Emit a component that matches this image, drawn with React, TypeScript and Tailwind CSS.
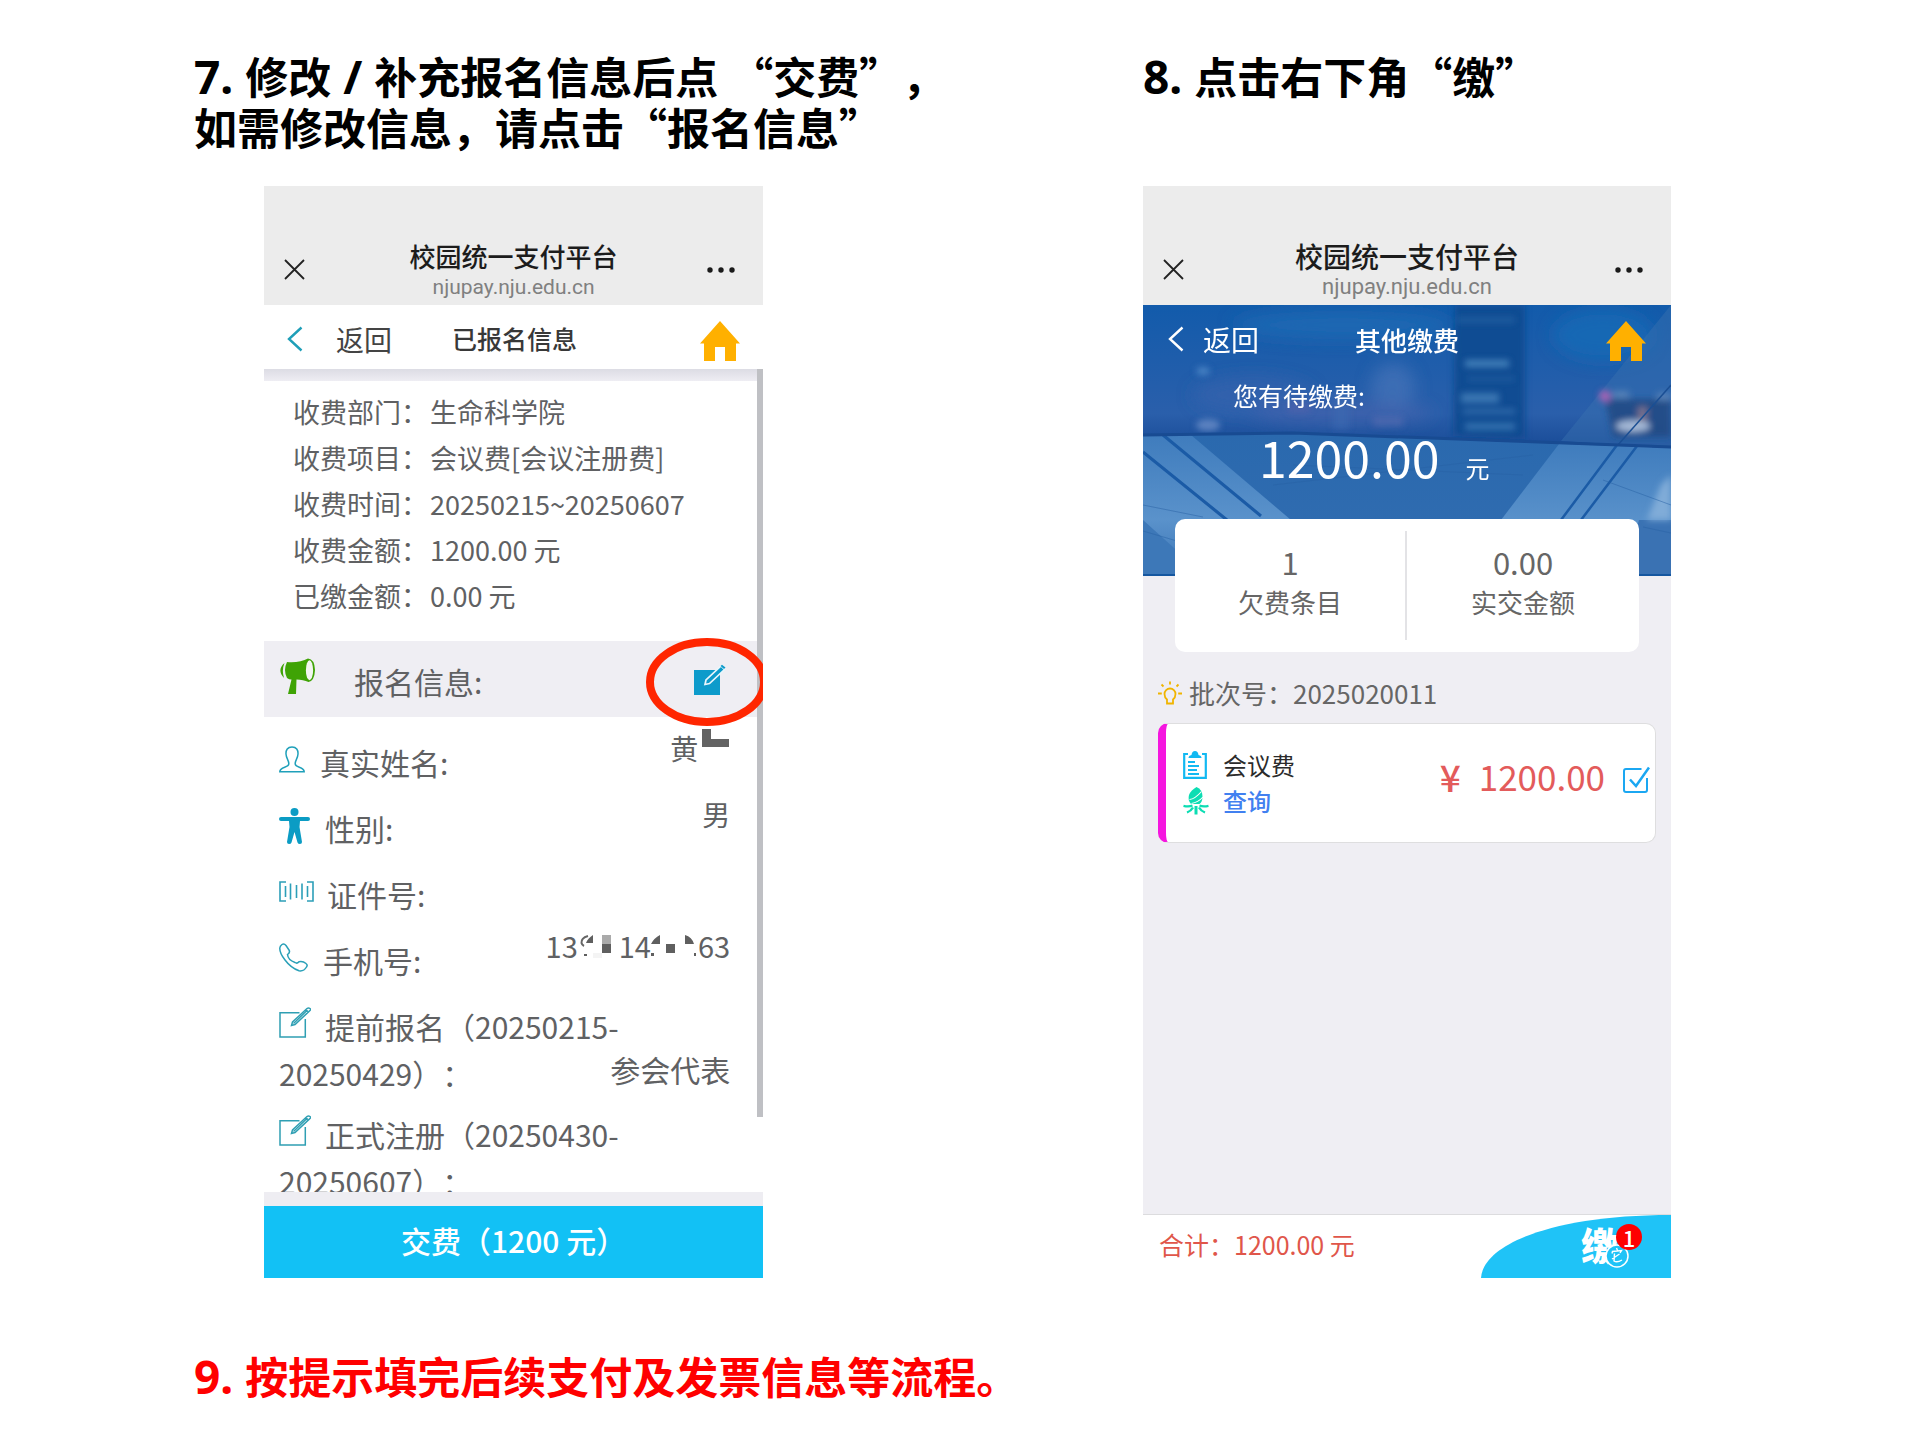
import React from "react";

const cjk = "font-['Noto_Sans_CJK_SC',sans-serif]";

function Num({ children }: { children: React.ReactNode }) {
  return <span className="font-['Noto_Sans','Noto_Sans_CJK_SC',sans-serif] text-[46px] leading-none">{children}</span>;
}

function BrowserBar({ titleClass, urlClass }: { titleClass: string; urlClass: string }) {
  return (
    <header className="grid h-[119px] grid-cols-[80px_1fr_80px] bg-[#ececec]">
      <button aria-label="关闭" className="flex items-start pl-[19px] pt-[72px]">
        <svg width="23" height="23" viewBox="0 0 23 23" fill="none" stroke="#222" strokeWidth="1.8">
          <path d="M2 2 21 21M21 2 2 21" />
        </svg>
      </button>
      <div className="flex flex-col items-center pt-[53px]">
        <div className={titleClass}>校园统一支付平台</div>
        <div className={urlClass}>njupay.nju.edu.cn</div>
      </div>
      <button aria-label="更多" className="flex items-start justify-end pr-[28px] pt-[81px]">
        <svg width="28" height="6" viewBox="0 0 28 6" fill="#1a1a1a">
          <circle cx="3" cy="3" r="2.7" />
          <circle cx="14" cy="3" r="2.7" />
          <circle cx="25" cy="3" r="2.7" />
        </svg>
      </button>
    </header>
  );
}

function Back({ stroke }: { stroke: string }) {
  return (
    <svg width="16" height="26" viewBox="0 0 16 26" fill="none" stroke={stroke} strokeWidth="2.4">
      <path d="M14.5 1.5 2 13 14.5 24.5" />
    </svg>
  );
}

function Home() {
  return (
    <svg width="40" height="40" viewBox="0 0 40 40" fill="#ffb000">
      <path d="M20 0 40 22.5H36V40H25V26H15V40H4V22.5H0Z" />
    </svg>
  );
}

function Megaphone() {
  return (
    <svg width="36" height="36" viewBox="0 0 36 36">
      <path d="M8 4C16 5 24 3 29 .5Q35.500 1 36 12Q35.5 23 29.5 24C26 22.500 22 21.5 17.500 21.5L17 36H9L12.5 21.5Q10 21.5 8 20Q4 12 8 4Z" fill="#3fa305" />
      <ellipse cx="30.5" cy="12.3" rx="3.6" ry="10" fill="#f2f5f0" />
      <path d="M5.5 5Q-2.5 12 5 20Q2.5 12 5.500 5Z" fill="#3fa305" />
    </svg>
  );
}

function PersonIcon() {
  return (
    <svg width="26" height="27" viewBox="0 0 26 27" fill="none" stroke="#1fa0ba" strokeWidth="1.5">
      <path d="M13 1C8.5 1 6.800 4 7 8C7.2 12.5 10 14.500 9.800 18C9.5 22 1 20.500 .8 25.700H25.200C25 20.5 16.5 22 16.200 18C16 14.500 18.8 12.500 19 8C19.2 4 17.500 1 13 1Z" />
    </svg>
  );
}

function BodyIcon() {
  return (
    <svg width="31" height="36" viewBox="0 0 31 36" fill="#0b9cc4">
      <circle cx="15.5" cy="4" r="4" />
      <path d="M2 9H29Q31 9 31 11T29 13H21L20.5 19 23 34Q23 36 21 36T18.5 34.5L15.500 24 12.5 34.500Q12 36 10 36T8 34L10.500 19 10 13H2Q0 13 0 11T2 9Z" />
    </svg>
  );
}

function BarcodeIcon() {
  return (
    <svg width="35" height="21" viewBox="0 0 35 21" fill="none" stroke="#2c9fb8" strokeWidth="1.6">
      <path d="M7 1H1V20H7M28 1H34V20H28M6.5 5V16M11.500 2.500V18.500M17.500 4V17M23 2.500V18.500M28.500 5V16" />
    </svg>
  );
}

function PhoneIcon() {
  return (
    <svg width="29" height="29" viewBox="0 0 29 29" fill="none" stroke="#2aa0b8" strokeWidth="1.5">
      <path d="M3 1.5Q5 0 7 2.5L10 7Q11.5 9.500 8.500 11.500Q9 17 16 19.500Q18 21 20 18.800Q24 18 27 20.500Q29 22 27.500 24Q25 28.500 20 27.800Q12 25 6 17Q.5 10 .8 5Q1 3 3 1.500Z" />
    </svg>
  );
}

function EditIcon() {
  return (
    <svg width="32" height="31" viewBox="0 0 32 31" fill="none" stroke="#2f9fb3" strokeWidth="1.5">
      <path d="M20.500 5.700H1V30H26.300V12" />
      <path d="M12.500 18.500 13.500 15 28 1.500Q29.500 .3 31 1.500T30.300 4.200L16 17.500ZM26.500 3 29 5.500" />
      <path d="M14.500 16.500 28.500 3" />
    </svg>
  );
}

function EditSolid() {
  return (
    <svg width="32" height="31" viewBox="0 0 32 31">
      <path d="M0 6H26V31H0Z" fill="#0d9bcb" />
      <path d="M11 20.500 12 16 27 2 30.500 5.500 15.500 19.500Z" fill="#0d9bcb" stroke="#eaf6fb" strokeWidth="1.7" />
      <path d="M28 .8 31.500 3.500 30 5 26.500 2Z" fill="#0d9bcb" />
    </svg>
  );
}

function NameMask() {
  return (
    <svg width="32" height="20" viewBox="0 0 32 20" fill="#636363" aria-hidden="true">
      <path d="M4 0H13V10H31V18H4Z" />
    </svg>
  );
}

function MaskA() {
  return (
    <svg width="41" height="25" viewBox="0 0 41 25" fill="#5f5f5f" aria-hidden="true">
      <path d="M15 2V10H8Q10 5 15 2Z" />
      <path d="M10 3Q3 5 3.500 10Q4 12 6 13" fill="none" stroke="#666" strokeWidth="2" />
      <path d="M6 21H9V23H6Z" />
      <path d="M24 2H33V11H24Z" fill="#aaa" />
      <path d="M24 11H33V20H24Z" />
      <path d="M15 20H24V25H15Z" fill="#f4f4f4" />
    </svg>
  );
}

function MaskB() {
  return (
    <svg width="47" height="25" viewBox="0 0 47 25" fill="#5f5f5f" aria-hidden="true">
      <path d="M9 2V11H0Q3 5 9 2ZM15 11H24V20H15ZM34 2Q41 4 43 11H34ZM0 20H3V23H0ZM43 20H45V23H43Z" />
    </svg>
  );
}

const fees = [
  ["收费部门：", "生命科学院"],
  ["收费项目：", "会议费[会议注册费]"],
  ["收费时间：", "20250215~20250607"],
  ["收费金额：", "1200.00 元"],
  ["已缴金额：", "0.00 元"],
];

function Field({ icon, label, gap, children }: { icon: React.ReactNode; label: string; gap: string; children?: React.ReactNode }) {
  return (
    <div className="flex h-[47px] justify-between">
      <dt className={`flex items-center ${gap}`}>
        <span className="mb-1.5">{icon}</span>
        {label}
      </dt>
      <dd className="flex h-[17px] items-center">{children}</dd>
    </div>
  );
}

function Period({ first, second, children }: { first: string; second: string; children?: React.ReactNode }) {
  return (
    <div className="grid whitespace-nowrap leading-[47px]">
      <dt className="col-start-1 row-start-1">
        <span className="flex items-center gap-[14px]">
          <span className="mb-2">
            <EditIcon />
          </span>
          {first}
        </span>
        {second}
      </dt>
      <dd className="col-start-1 row-start-1 mb-1 self-end justify-self-end">{children}</dd>
    </div>
  );
}

function SignupPhone() {
  return (
    <section className="ml-[70px] w-[52.6%] overflow-hidden text-[#606163]">
      <BrowserBar
        titleClass="text-[26px] leading-[34px] font-medium text-[#1c1c1c] whitespace-nowrap"
        urlClass="font-['Roboto',sans-serif] text-[21px] leading-[28px] text-[#808080]"
      />
      <nav className="flex h-16 items-center bg-white pl-[23px] pr-[23px] pt-1">
        <a href="#back" className="flex items-center gap-[33px] text-[28px] text-[#444]">
          <Back stroke="#1f9fb8" />
          返回
        </a>
        <h2 className="ml-[60px] flex-1 text-[25px] font-medium text-[#383838]">已报名信息</h2>
        <a href="#home" aria-label="首页" className="mt-1">
          <Home />
        </a>
      </nav>
      <div className="relative h-[823px] overflow-hidden bg-white">
        <div className="h-3 bg-linear-to-b from-[#dcdce4] to-[#eeedf3]" />
        <dl className="h-[260px] pl-[29px] pt-[8px] text-[27px] leading-[46px]">
          {fees.map(([k, v]) => (
            <div key={k} className="flex gap-0.5 whitespace-nowrap">
              <dt>{k}</dt>
              <dd>{v}</dd>
            </div>
          ))}
        </dl>
        <div className="relative flex h-[76px] items-center bg-[#efeef3] pl-[15px] pr-[37px]">
          <span className="mb-1.5">
            <Megaphone />
          </span>
          <h3 className="ml-[39px] flex-1 pt-1 text-[30px]">报名信息:</h3>
          <button aria-label="编辑报名信息">
            <EditSolid />
          </button>
        </div>
        <dl className="flex flex-col gap-[19px] pl-[15px] pr-[33px] pt-[22px] text-[30px]">
          <Field icon={<PersonIcon />} label="真实姓名:" gap="gap-[15px]">
            <span className="text-[28px]">黄</span>
            <span className="pb-[18px]"><NameMask /></span>
          </Field>
          <Field icon={<BodyIcon />} label="性别:" gap="gap-[15px]">
            <span className="text-[28px]">男</span>
          </Field>
          <Field icon={<BarcodeIcon />} label="证件号:" gap="gap-[13px]" />
          <Field icon={<PhoneIcon />} label="手机号:" gap="gap-[15px]">
            <span className="text-[29px]">13</span>
            <MaskA />
            <span className="text-[29px]">14</span>
            <MaskB />
            <span className="text-[29px]">63</span>
          </Field>
          <div className="flex flex-col gap-[14px]">
            <Period first="提前报名（20250215-" second="20250429）：">参会代表</Period>
            <Period first="正式注册（20250430-" second="20250607）：" />
          </div>
        </dl>
        <div className="absolute right-0 top-0 h-[748px] w-[6px] bg-[#bfc0c4]" />
        <svg className="absolute -right-[5px] top-[269px]" width="122" height="88" viewBox="0 0 122 88" fill="none">
          <ellipse cx="61" cy="44" rx="57" ry="40" stroke="#ff2600" strokeWidth="8" />
        </svg>
      </div>
      <div className="h-[14px] bg-[#eeedf2]" />
      <button className="h-[72px] w-full bg-[#12c1f5] pb-1 text-[30px] font-medium text-white">交费（1200 元）</button>
    </section>
  );
}

function HeroArt() {
  return (
    <svg className="absolute inset-0 h-full w-full" viewBox="0 0 528 271" preserveAspectRatio="none" aria-hidden="true">
      <defs>
        <linearGradient id="sky" x1="0" y1="0" x2="0" y2="1">
          <stop offset="0" stopColor="#125bab" />
          <stop offset=".4" stopColor="#2a5fab" />
          <stop offset=".5" stopColor="#1c4f9b" />
        </linearGradient>
        <linearGradient id="floor" x1="0" y1="0" x2="0" y2="1">
          <stop offset="0" stopColor="#2a69ae" />
          <stop offset="1" stopColor="#326db1" />
        </linearGradient>
        <linearGradient id="path" x1="0" y1="0" x2="0" y2="1">
          <stop offset="0" stopColor="#3f7cbd" />
          <stop offset=".6" stopColor="#5a92cb" />
          <stop offset="1" stopColor="#3a74b5" />
        </linearGradient>
        <filter id="soft" x="-60%" y="-60%" width="220%" height="220%">
          <feGaussianBlur stdDeviation="8" />
        </filter>
        <filter id="edge" x="-30%" y="-60%" width="160%" height="220%">
          <feGaussianBlur stdDeviation="3" />
        </filter>
      </defs>
      <rect width="528" height="271" fill="url(#sky)" />
      <g filter="url(#soft)">
        <ellipse cx="200" cy="20" rx="110" ry="14" fill="#1d68b2" />
        <ellipse cx="250" cy="82" rx="22" ry="24" fill="#4673b8" opacity=".7" />
        <ellipse cx="110" cy="90" rx="60" ry="18" fill="#3463ad" opacity=".8" />
        <ellipse cx="200" cy="108" rx="90" ry="12" fill="#4a62ad" opacity=".6" />
        <ellipse cx="460" cy="30" rx="50" ry="26" fill="#1667b4" />
      </g>
      <g filter="url(#edge)">
        <ellipse cx="65" cy="120" rx="12" ry="6" fill="#5c82c0" />
        <ellipse cx="60" cy="66" rx="7" ry="4" fill="#4a83c4" />
        <rect x="145" y="98" width="22" height="10" fill="#5264ac" opacity=".6" />
        <rect x="190" y="84" width="16" height="40" fill="#3b69b2" opacity=".6" />
        <rect x="230" y="112" width="30" height="9" fill="#6070b4" opacity=".5" />
        <path d="M312 0H382V134L310 131Z" fill="#124b90" opacity=".9" />
      </g>
      <g filter="url(#edge)" fill="#4380ba">
        <rect x="322" y="55" width="44" height="7" />
        <rect x="318" y="88" width="38" height="10" opacity=".8" />
        <rect x="320" y="104" width="52" height="5" opacity=".6" />
        <rect x="322" y="118" width="50" height="7" opacity=".7" />
        <rect x="314" y="12" width="58" height="6" opacity=".3" />
        <rect x="324" y="72" width="48" height="4" opacity=".3" />
      </g>
      <path d="M528 0 418 136 528 143Z" fill="#3a70b0" opacity=".45" />
      <g filter="url(#edge)">
        <path d="M462 94H528V132H470Z" fill="#23477f" opacity=".8" />
        <circle cx="462" cy="91" r="6" fill="#a263b4" />
        <ellipse cx="490" cy="121" rx="17" ry="6" fill="#a4b8d6" />
        <rect x="470" y="86" width="16" height="7" fill="#5682b8" />
        <rect x="514" y="88" width="14" height="7" fill="#5682b8" />
        <rect x="495" y="102" width="9" height="14" fill="#786f8c" />
      </g>
      <path d="M528 80 474 141" stroke="#1b4f94" strokeWidth="1.5" />
      <path d="M0 131 150 128 528 143V271H0Z" fill="url(#floor)" />
      <path d="M0 131 48 130 148 215V271H0Z" fill="url(#path)" />
      <path d="M0 215 62 271H0Z" fill="#3d78b8" />
      <path d="M416 139 528 143V271H470L358 215Z" fill="url(#path)" />
      <path d="M496 215H528V271H480Z" fill="#3a72b3" />
      <path d="M518 180 528 170V215H504Z" fill="#80acd8" filter="url(#edge)" />
      <g fill="none" stroke="#1b5ba6" strokeWidth="3">
        <path d="M20 130 118 211M0 147 84 215" />
        <path d="M474 140 418 215M494 141 438 215" strokeWidth="2.5" />
      </g>
      <path d="M0 130 150 128 528 142" fill="none" stroke="#184b92" strokeWidth="3" />
      <path d="M0 200 60 212M0 226 34 236M150 160 380 170M130 180 390 150M460 175 528 200M500 222 528 228" fill="none" stroke="#2862a6" strokeWidth="1" opacity=".5" />
      <path d="M0 270H528" stroke="#1557a0" strokeWidth="2" />
    </svg>
  );
}

function BulbIcon() {
  return (
    <svg width="24" height="24" viewBox="0 0 24 24" fill="none" stroke="#f0b400" strokeWidth="1.8">
      <path d="M9 22.500V18.500Q6.500 16.500 6.500 13A5.500 5.500 0 0 1 17.500 13Q17.500 16.500 15 18.500V22.500Z" />
      <path d="M12 .5V3.500M3.500 3.500 5.500 5.500M20.500 3.500 18.500 5.500M0 12.500H3.800M20.200 12.500H24" />
    </svg>
  );
}

function ClipboardIcon() {
  return (
    <svg width="24" height="28" viewBox="0 0 24 28" fill="none" stroke="#12b9f2" strokeWidth="2.2">
      <path d="M5 3H1.200V26.800H22.800V3H19" />
      <path d="M5.500 7Q5.500 4.500 8.500 4Q9 0 12 0T15.500 4Q18.500 4.500 18.500 7Z" fill="#12b9f2" stroke="none" />
      <path d="M5 11H12M5 15H16M5 19H14M5 23H16" strokeWidth="1.8" />
    </svg>
  );
}

function SquidIcon() {
  return (
    <svg width="26" height="28" viewBox="0 0 26 28" fill="#0cddb3">
      <path d="M13.500 0Q19.500 2.500 19.500 9.500Q19.500 15 16.500 17H8Q4.500 13 6 8Q8 3 13.500 0Z" />
      <path d="M6.500 12.500Q12 12 18.500 4.500M8.500 16.500Q15 15.500 20 10" stroke="#fff" strokeWidth="1.1" fill="none" />
      <path d="M11.500 19H14.500V27.500H11.500Z" />
      <path d="M9.500 18.500Q6 20 .5 18.800M16.500 18.500Q20 20 25.500 18.800M10 20.500Q8 24 4 25.500M16 20.500Q18 24 22 25.500" fill="none" stroke="#0cddb3" strokeWidth="2.4" />
    </svg>
  );
}

function PayPhone() {
  return (
    <section className="flex flex-col bg-[#efeef3] text-[#666]">
      <BrowserBar
        titleClass="text-[28px] leading-[34px] font-medium text-[#1c1c1c] whitespace-nowrap"
        urlClass="font-['Roboto',sans-serif] text-[22px] leading-[28px] text-[#808080]"
      />
      <div className="relative h-[271px] text-white">
        <HeroArt />
        <div className="relative">
          <nav className="grid h-[68px] grid-cols-[1fr_auto_1fr] items-center px-[25px]">
            <a href="#back" className="flex items-center gap-[19px] text-[28px]">
              <Back stroke="#fff" />
              返回
            </a>
            <h2 className="text-[26px] font-medium">其他缴费</h2>
            <a href="#home" aria-label="首页" className="mt-1 justify-self-end">
              <Home />
            </a>
          </nav>
          <p className="pl-[90px] pt-[3px] text-[25px] leading-[38px]">您有待缴费:</p>
          <p className="flex items-baseline gap-[26px] pl-[116px] leading-[84px]">
            <span className="text-[50px]">1200.00</span>
            <span className="text-[24px]">元</span>
          </p>
        </div>
      </div>
      <div className="relative mx-[32px] -mt-[57px] grid h-[133px] grid-cols-2 rounded-[10px] bg-white py-3 text-center">
        <div className="border-r-2 border-[#e3e3e6] pt-[11px]">
          <div className="text-[31px] leading-10">1</div>
          <div className="text-[26px] leading-10">欠费条目</div>
        </div>
        <div className="pt-[11px]">
          <div className="text-[31px] leading-10">0.00</div>
          <div className="text-[26px] leading-10">实交金额</div>
        </div>
      </div>
      <div className="mt-[21px] flex items-center gap-[7px] pl-[15px] text-[26px] leading-10">
        <BulbIcon />
        <span>批次号：2025020011</span>
      </div>
      <div className="mx-[15px] mt-[10px] flex h-[120px] items-center rounded-[10px] border-y border-r border-l-8 border-[#dededf] border-l-[#f516df] bg-white pl-[17px] pr-[5px]">
        <div className="grid grid-cols-[26px_auto] items-center gap-x-[14px] text-[24px] leading-9">
          <ClipboardIcon />
          <span className="text-[#2b2b2b]">会议费</span>
          <SquidIcon />
          <a href="#query" className="font-medium text-[#4180f0]">查询</a>
        </div>
        <div className="ml-auto pb-[14px] text-[35px] leading-10 text-[#e35b5b]">
          <label htmlFor="pick" className="flex items-center gap-[14px]">
            <span className="w-[29px] text-center text-[37px] font-medium">¥</span>
            <span>1200.00</span>
          </label>
        </div>
        <span className="relative ml-[18px] flex pb-[8px]">
          <input id="pick" type="checkbox" defaultChecked className="peer absolute h-[26px] w-[26px] appearance-none" />
          <svg className="pointer-events-none text-transparent peer-checked:text-[#1ba7f2]" width="27" height="27" viewBox="0 0 27 27" fill="none" strokeWidth="2">
            <path d="M18.500 3H3Q1 3 1 5V24Q1 26 3 26H22Q24 26 24 24V12" stroke="#1ba7f2" />
            <path d="M7 13.500 13 20 26 1.500" stroke="currentColor" strokeWidth="2.5" />
          </svg>
        </span>
      </div>
      <footer className="relative mt-auto flex h-[64px] items-center justify-between border-t border-[#dcdcde] bg-white pl-[16px] text-[25px] text-[#e0564a]">
        <span className="pb-1">合计：1200.00 元</span>
        <button aria-label="缴费" className="relative h-[63px] w-[190px]">
          <svg className="absolute inset-0" width="190" height="63" viewBox="0 0 190 63">
            <path d="M0 63C2 30 70 0 190 0V63Z" fill="#1fc3f7" />
          </svg>
          <span className="absolute left-[100px] top-[9px] text-[38px] leading-10 font-black text-white">缴</span>
          <svg className="absolute left-[123px] top-[28px]" width="26" height="26" viewBox="0 0 26 26">
            <circle cx="13" cy="13" r="11" fill="#1fc3f7" stroke="#fff" strokeWidth="1.5" />
            <path d="M12.500 5 13.500 7.500M8 10.500 8.500 8.500 17.500 7.500 16 10M10.500 10.500 10 18Q13 20 18 17M15.500 11 8 16" fill="none" stroke="#fff" strokeWidth="1.4" />
          </svg>
          <span className="absolute left-[135px] top-[9px] flex h-[26px] w-[26px] items-center justify-center rounded-full bg-[#fe0000] text-[22px] leading-none font-medium text-white">1</span>
        </button>
      </footer>
    </section>
  );
}

export default function App() {
  return (
    <main className={`${cjk} min-h-screen bg-white pb-10 pl-[194px] pr-[249px] pt-[50px] [text-spacing-trim:space-all]`}>
      <div className="grid grid-cols-[949fr_528fr] grid-rows-[102px_auto] gap-y-[34px]">
        <h1 className="text-[43px] leading-[51px] font-bold whitespace-nowrap text-black">
          <Num>7. </Num>修改<Num> / </Num>补充报名信息后点<Num> </Num>“交费”，
          <br />
          如需修改信息，请点击“报名信息”
        </h1>
        <h1 className="text-[43px] leading-[51px] font-bold whitespace-nowrap text-black">
          <Num>8. </Num>点击右下角“缴”
        </h1>
        <SignupPhone />
        <PayPhone />
      </div>
      <p className="mt-[72px] text-[43px] leading-[51px] font-bold text-[#ff0000]">
        <Num>9. </Num>按提示填完后续支付及发票信息等流程。
      </p>
    </main>
  );
}
